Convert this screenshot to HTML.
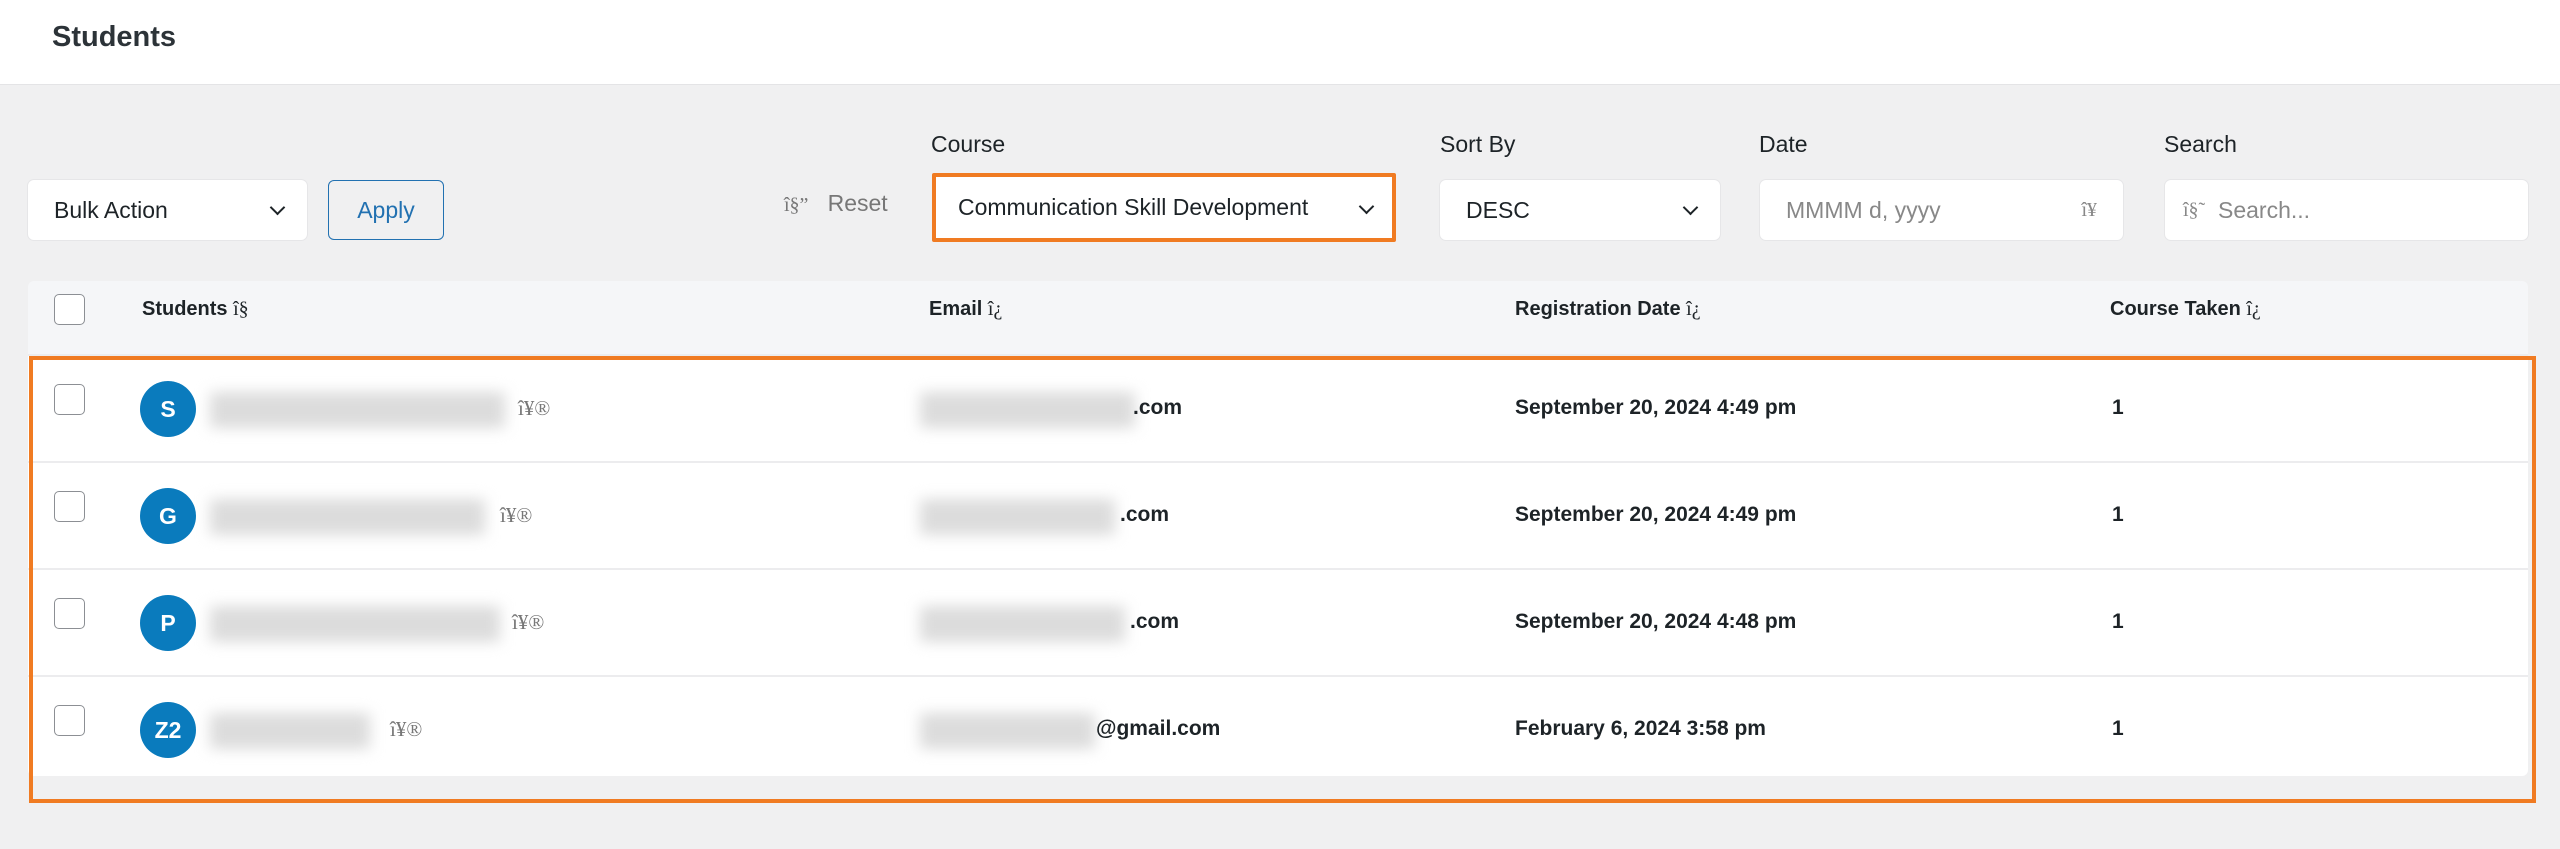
<!DOCTYPE html>
<html><head><meta charset="utf-8"><style>
*{box-sizing:border-box;margin:0;padding:0}
body{width:2560px;height:849px;background:#f0f0f1;font-family:"Liberation Sans",sans-serif;color:#1d2327;position:relative;overflow:hidden}
.abs{position:absolute}
.top{left:0;top:0;width:2560px;height:85px;background:#fff;border-bottom:1px solid #e4e4e6}
.title{left:52px;top:21px;font-size:29px;font-weight:600;color:#2c3338}
.lbl{font-size:23px;color:#1d2327;top:131px}
.box{background:#fff;border-radius:6px;height:60px;top:180px;font-size:23px;display:flex;align-items:center;padding-left:26px;box-shadow:0 0 0 1px #e6e6e8}
.chev{position:absolute;right:24px;top:22px;width:11px;height:11px;border-right:2.5px solid #1d2327;border-bottom:2.5px solid #1d2327;transform:rotate(45deg)}
.cb{width:31px;height:31px;border:1.5px solid #8c8f94;border-radius:5px;background:#fff;position:absolute;left:54px}
.th{font-size:20px;font-weight:600;top:298px;color:#1d2327}
.row{left:28px;width:2500px;height:107px;background:#fff;border-bottom:2px solid #ececee}
.av{position:absolute;left:112px;top:25px;width:56px;height:56px;border-radius:50%;background:#0a7bbd;color:#fff;font-size:23px;font-weight:600;display:flex;align-items:center;justify-content:center}
.blur{position:absolute;background:#dcdcdc;filter:blur(7px);top:36px;height:36px}
.t{position:absolute;font-size:21px;font-weight:600;top:40px}
.g{position:absolute;font-size:21px;color:#777;font-family:"Liberation Serif",serif;top:40px}
</style></head><body>
<div class="abs top"></div>
<div class="abs title">Students</div>

<div class="abs lbl" style="left:931px">Course</div>
<div class="abs lbl" style="left:1440px">Sort By</div>
<div class="abs lbl" style="left:1759px">Date</div>
<div class="abs lbl" style="left:2164px">Search</div>

<div class="abs box" style="left:28px;width:279px">Bulk Action<span class="chev"></span></div>
<div class="abs" style="left:328px;top:180px;width:116px;height:60px;border:1.5px solid #2271b1;border-radius:6px;color:#2271b1;font-size:23px;display:flex;align-items:center;justify-content:center">Apply</div>
<div class="abs" style="left:784px;top:190px;font-size:23px;color:#777"><span style="font-family:'Liberation Serif',serif;font-size:20px">î§”</span>&nbsp;&nbsp; Reset</div>
<div class="abs box" style="left:932px;top:173px;height:69px;width:464px;border:4px solid #f07b22;border-radius:2px;padding-left:22px;box-shadow:none">Communication Skill Development<span class="chev" style="top:24px;right:20px"></span></div>
<div class="abs box" style="left:1440px;width:280px">DESC<span class="chev"></span></div>
<div class="abs box" style="left:1760px;width:363px;color:#888">MMMM d, yyyy<span style="position:absolute;right:26px;font-family:'Liberation Serif',serif;font-size:20px">î¥</span></div>
<div class="abs box" style="left:2165px;width:363px;color:#888;padding-left:18px"><span style="font-family:'Liberation Serif',serif;font-size:20px">î§˜</span>&nbsp;&nbsp;Search...</div>

<div class="abs" style="left:28px;top:281px;width:2500px;height:75px;background:#f5f6f8;border-radius:6px 6px 0 0;border-bottom:2px solid #ececee"></div>
<div class="cb" style="top:294px"></div>
<div class="abs th" style="left:142px">Students <span style="font-family:'Liberation Serif',serif;font-weight:400">î§</span></div>
<div class="abs th" style="left:929px">Email <span style="font-family:'Liberation Serif',serif;font-weight:400">î¿</span></div>
<div class="abs th" style="left:1515px">Registration Date <span style="font-family:'Liberation Serif',serif;font-weight:400">î¿</span></div>
<div class="abs th" style="left:2110px">Course Taken <span style="font-family:'Liberation Serif',serif;font-weight:400">î¿</span></div>

<div class="abs row" style="top:356px"><div class="cb" style="left:26px;top:28px"></div><div class="av">S</div><div class="blur" style="left:182px;width:295px"></div><div class="g" style="left:490px">î¥®</div><div class="blur" style="left:892px;width:215px"></div><div class="t" style="left:1105px">.com</div><div class="t" style="left:1487px">September 20, 2024 4:49 pm</div><div class="t" style="left:2084px">1</div></div>
<div class="abs row" style="top:463px"><div class="cb" style="left:26px;top:28px"></div><div class="av">G</div><div class="blur" style="left:182px;width:275px"></div><div class="g" style="left:472px">î¥®</div><div class="blur" style="left:892px;width:195px"></div><div class="t" style="left:1092px">.com</div><div class="t" style="left:1487px">September 20, 2024 4:49 pm</div><div class="t" style="left:2084px">1</div></div>
<div class="abs row" style="top:570px"><div class="cb" style="left:26px;top:28px"></div><div class="av">P</div><div class="blur" style="left:182px;width:290px"></div><div class="g" style="left:484px">î¥®</div><div class="blur" style="left:892px;width:205px"></div><div class="t" style="left:1102px">.com</div><div class="t" style="left:1487px">September 20, 2024 4:48 pm</div><div class="t" style="left:2084px">1</div></div>
<div class="abs row" style="top:677px;height:99px;border-bottom:none;border-radius:0 0 6px 6px"><div class="cb" style="left:26px;top:28px"></div><div class="av">Z2</div><div class="blur" style="left:182px;width:160px"></div><div class="g" style="left:362px">î¥®</div><div class="blur" style="left:892px;width:175px"></div><div class="t" style="left:1068px">@gmail.com</div><div class="t" style="left:1487px">February 6, 2024 3:58 pm</div><div class="t" style="left:2084px">1</div></div>

<div class="abs" style="left:29px;top:356px;width:2507px;height:447px;border:4px solid #f07b22"></div>
</body></html>
